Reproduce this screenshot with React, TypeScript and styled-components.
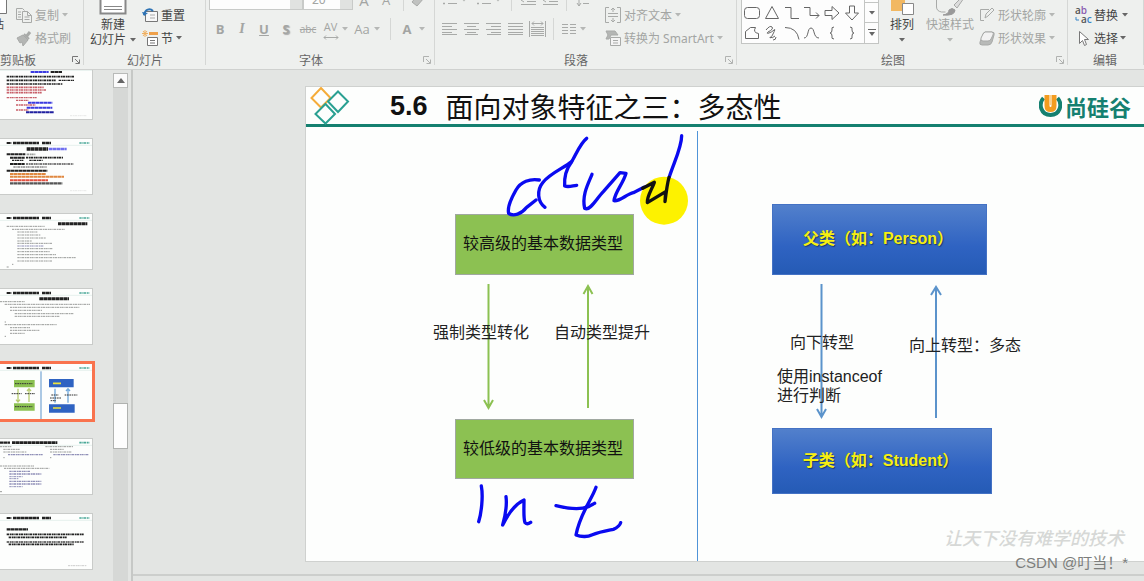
import React from "react";
import styled, { createGlobalStyle } from "styled-components";

const cjk = '"Noto Sans CJK SC", sans-serif';

const GlobalStyle = createGlobalStyle`
  * { box-sizing: border-box; }
  body { margin: 0; background: #e3e5e3; font-family: "Noto Sans", ${cjk}; font-size: 12px; color: #444; }
  button, select { font: inherit; color: inherit; }
  svg { display: block; flex: none; }
`;

/* ---------- page frame ---------- */

const Page = styled.div`
  display: flex;
  flex-direction: column;
  height: 100vh;
  overflow: hidden;
  position: relative;
`;

const Ribbon = styled.header`
  display: flex;
  flex: none;
  height: 70px;
  overflow: hidden;
  background: #eef0ee;
  border-bottom: 1px solid #cfd1cf;
`;

const Group = styled.section<{ $w?: number; $pad?: number }>`
  display: flex;
  flex-direction: column;
  justify-content: flex-end;
  position: relative;
  flex: ${(p) => (p.$w ? `0 0 ${p.$w}px` : "1 0 0")};
  padding-left: ${(p) => p.$pad ?? 0}px;
  &::after {
    content: "";
    position: absolute;
    right: 0;
    top: 0;
    bottom: 4px;
    width: 1px;
    background: #d5d7d5;
  }
`;

const GroupBody = styled.div<{ $gap?: number }>`
  display: flex;
  align-items: flex-end;
  height: 49px;
  gap: ${(p) => p.$gap ?? 0}px;
`;

const GroupFoot = styled.div<{ $inset?: number }>`
  display: flex;
  align-items: center;
  justify-content: space-between;
  height: 20px;
  padding: 2px 4px 0 ${(p) => p.$inset ?? 0}px;
  white-space: nowrap;
  color: #666;
`;

const Stack = styled.div`
  display: flex;
  flex-direction: column;
  align-items: flex-start;
`;

const Tool = styled.button<{ $dim?: boolean; $w?: number; $gap?: number }>`
  display: flex;
  align-items: center;
  justify-content: ${(p) => (p.$w ? "center" : "flex-start")};
  flex: none;
  gap: ${(p) => p.$gap ?? 3}px;
  width: ${(p) => (p.$w ? `${p.$w}px` : "auto")};
  height: 23px;
  padding: 0;
  border: 0;
  background: none;
  white-space: nowrap;
  color: ${(p) => (p.$dim ? "#a3a5a3" : "#444")};
`;

const BigTool = styled.button<{ $dim?: boolean; $w: number }>`
  display: flex;
  flex-direction: column;
  align-items: center;
  flex: none;
  width: ${(p) => p.$w}px;
  padding: 0 0 2px;
  border: 0;
  background: none;
  white-space: nowrap;
  line-height: 15px;
  color: ${(p) => (p.$dim ? "#a3a5a3" : "#444")};
`;

const BigLine = styled.span`
  display: flex;
  align-items: center;
  justify-content: center;
  gap: 4px;
  height: 15px;
`;

const PasteTool = styled(BigTool)`
  margin-left: -20px;
  margin-right: 12px;
  padding-bottom: 17px;
`;

const DrawStack = styled(Stack)`
  padding-left: 4px;
`;

const IconRow = styled.div<{ $low?: boolean }>`
  display: flex;
  align-items: center;
  height: ${(p) => (p.$low ? 24 : 26)}px;
  padding-bottom: ${(p) => (p.$low ? 0 : 8)}px;
  margin-bottom: ${(p) => (p.$low ? 8 : 0)}px;
`;

const Rule = styled.i<{ $m: number }>`
  width: 1px;
  height: 22px;
  margin: 0 ${(p) => p.$m}px;
  background: #d5d7d5;
`;

const Glyph = styled.span<{ $size?: number }>`
  font-family: "Open Sans", sans-serif;
  font-size: ${(p) => p.$size ?? 13}px;
  line-height: 16px;
`;

const BoldGlyph = styled(Glyph)`font-weight: 700;`;
const ItalicGlyph = styled(Glyph)`font-family: "Liberation Serif", serif; font-style: italic; font-weight: 700;`;
const UnderGlyph = styled(BoldGlyph)`text-decoration: underline;`;
const ShadowGlyph = styled(BoldGlyph)`text-shadow: 1px 1px 1px #aaa;`;
const StrikeGlyph = styled(Glyph)`text-decoration: line-through;`;

const Combo = styled.select<{ $w: number }>`
  appearance: none;
  width: ${(p) => p.$w}px;
  height: 22px;
  margin-bottom: 2px;
  padding: 0 14px 0 8px;
  border: 1px solid #c8cac8;
  border-radius: 0;
  background: linear-gradient(to left, #e0e2e0 12px, #fdfdfd 12px);
  color: #a3a5a3;
`;

const ShapeBox = styled.div`
  display: flex;
  width: 138px;
  height: 62px;
  margin-bottom: 5px;
  border: 1px solid #c3c5c3;
  background: #fdfdfd;
`;

const ShapeGrid = styled.div`
  display: grid;
  grid-template-columns: repeat(6, 20px);
  grid-auto-rows: 20px;
  width: 122px;
`;

const ShapeCell = styled.button`
  display: grid;
  place-items: center;
  padding: 0;
  border: 0;
  background: none;
`;

const ShapeScroll = styled.div`
  display: grid;
  grid-template-rows: repeat(3, 20px);
  flex: 1;
  border-left: 1px solid #c3c5c3;
`;

const ScrollCell = styled(ShapeCell)`
  border-bottom: 1px solid #c3c5c3;
`;

const Main = styled.main`
  display: flex;
  flex: 1;
  min-height: 0;
`;

/* ---------- thumbnails ---------- */

const ThumbList = styled.nav`
  display: flex;
  flex-direction: column;
  gap: 18px;
  flex: 0 0 113px;
  overflow: hidden;
`;

const Thumb = styled.button<{ $on?: boolean }>`
  flex: none;
  width: 102px;
  height: 57px;
  margin-left: -9px;
  padding: 0;
  border: 1px solid #c9cbc9;
  background: #fdfefd;
  outline: ${(p) => (p.$on ? "3px solid #f9734e" : "0")};
  outline-offset: -1px;
  &:first-child { margin-top: -7px; }
`;

const ScrollTrack = styled.div`
  display: flex;
  flex-direction: column;
  flex: 0 0 15px;
  margin-top: 3px;
  background: #d6d8d6;
`;

const ScrollUp = styled.button`
  display: grid;
  place-items: center;
  height: 15px;
  padding: 0;
  border: 1px solid #b8bab8;
  background: #fbfbfb;
`;

const ScrollHandle = styled.div`
  height: 46px;
  margin-top: 315px;
  border: 1px solid #b0b2b0;
  background: #fdfdfd;
`;

const Splitter = styled.div`
  flex: 0 0 5px;
  border-right: 2px solid #c6c8c6;
`;

/* ---------- slide ---------- */

const Workspace = styled.div`
  display: flex;
  flex-direction: column;
  flex: 1;
  min-width: 0;
  padding-top: 16px;
`;

const Slide = styled.article`
  display: flex;
  flex-direction: column;
  flex: 1;
  margin-left: 172px;
  border: 1px solid #cfd1cf;
  border-right: 0;
  background: #fdfefd;
`;

const NotesBar = styled.footer`
  flex: none;
  height: 19px;
  padding-top: 12px;
  &::before {
    content: "";
    display: block;
    height: 2px;
    background: #cccecc;
  }
`;

const SlideHead = styled.div`
  display: flex;
  align-items: center;
  flex: none;
  height: 40px;
  padding: 0 13px 0 4px;
  border-bottom: 3px solid #158070;
`;

const Title = styled.h1`
  display: flex;
  align-items: center;
  gap: 18px;
  flex: 1;
  margin: 0 0 0 40px;
  font: 400 28px/36px ${cjk};
  color: #111;
  white-space: nowrap;
`;

const TitleNo = styled.span`
  font: 700 27px/36px "Liberation Sans", sans-serif;
`;

const Brand = styled.div`
  display: flex;
  align-items: center;
  gap: 3px;
  font: 700 22px/32px ${cjk};
  color: #158070;
`;

const Diagram = styled.div`
  position: relative;
  flex: 1;
`;

const Layer = styled.svg<{ $x: number; $y: number }>`
  position: absolute;
  left: ${(p) => p.$x}px;
  top: ${(p) => p.$y}px;
`;

const Divider = styled.div`
  position: absolute;
  left: 391px;
  top: 4px;
  bottom: 0;
  width: 1px;
  background: #4f94d8;
`;

const Node = styled.div<{ $x: number; $y: number; $w: number; $h: number; $blue?: boolean }>`
  position: absolute;
  left: ${(p) => p.$x}px;
  top: ${(p) => p.$y}px;
  width: ${(p) => p.$w}px;
  height: ${(p) => p.$h}px;
  display: flex;
  align-items: center;
  justify-content: center;
  padding: 0 3px 1px 0;
  white-space: nowrap;
  font: ${(p) => (p.$blue ? 700 : 400)} 16px/20px "Liberation Sans", ${cjk};
  color: ${(p) => (p.$blue ? "#f7f010" : "#111")};
  text-shadow: ${(p) => (p.$blue ? "1px 1px 1px #1d3a6b" : "none")};
  background: ${(p) => (p.$blue ? "linear-gradient(#5280cc, #2f63c2 60%, #255bb5)" : "#8cc152")};
  border: 1px solid ${(p) => (p.$blue ? "#4472c4" : "#a0a8a0")};
`;

const Label = styled.p<{ $x: number; $y: number }>`
  position: absolute;
  left: ${(p) => p.$x}px;
  top: ${(p) => p.$y}px;
  margin: 0;
  font: 16px/19px "Liberation Sans", ${cjk};
  color: #222;
  white-space: nowrap;
`;

const Motto = styled.p`
  position: absolute;
  right: 20px;
  bottom: 13px;
  margin: 0;
  font: italic 500 18px/22px ${cjk};
  color: #d6d8d6;
`;

const Credit = styled.p`
  position: absolute;
  right: 16px;
  bottom: 8px;
  margin: 0;
  font: 15px/20px "Liberation Sans", ${cjk};
  color: #7c7e7c;
`;

/* ---------- icons ---------- */

const Caret = ({ c = "#666" }: { c?: string }) => (
  <svg width="6" height="4"><path d="M0 0h6L3 3.500z" fill={c} /></svg>
);
const DimCaret = () => <Caret c="#b5b7b5" />;

const Launcher = ({ c = "#b0b2b0" }: { c?: string }) => (
  <svg width="8" height="8" fill="none" stroke={c}><path d="M.5 6V.5H6M3 3l4 4M7.500 3.500v4h-4" /></svg>
);

const Draw = ({ w = 16, h = 16, c = "#a8aaa8", children }: { w?: number; h?: number; c?: string; children: React.ReactNode }) => (
  <svg width={w} height={h} fill="none" stroke={c} strokeWidth="1">{children}</svg>
);

const PasteIcon = () => <Draw w={32} h={32} c="#777"><path d="M12.500 4.500h14l4 4v20h-18z" fill="#fff" /></Draw>;
const CopyIcon = () => (
  <Draw><path d="M6 12.500H.5v-11h6l2 2" /><path d="M6.500 4.500h5l4 4v7h-9zM11.500 4.500v4h4M2 5h3M2 7.500h3M2 10h3M8.500 10h5M8.500 12.500h5" /></Draw>
);
const BrushIcon = () => (
  <Draw><path d="M1 8l6-3 5 5-5 6-1-4-2 1z" fill="#b4b6b4" /><path d="M8 4l5 5" strokeWidth="2" /><path d="M10 7l4-5" strokeWidth="3" /></Draw>
);
const NewSlideIcon = () => (
  <Draw w={28} h={28} c="#888"><path d="M1.500 1.500h25v23h-25z" fill="#fff" strokeWidth="2" /><path d="M5 17.500h18M5 20.500h18" /></Draw>
);
const ResetIcon = () => (
  <Draw c="#777"><path d="M3.500 4.500h12v10h-12z" fill="#f8f8f8" /><path d="M8 8h5M8 11h5" stroke="#aaa" /><path d="M2 8C3 2 8 1 11 4" stroke="#2f74b5" strokeWidth="2" /><path d="M0 5l2 4 4-3z" fill="#2f74b5" stroke="none" /></Draw>
);
const SectionIcon = () => (
  <Draw c="#777"><path d="M7 3.500h9" stroke="#efa04a" strokeWidth="3" /><path d="M3 0v7M0 3.500h6M1 1l4 5M5 1L1 6" stroke="#f0b060" /><path d="M5.500 7.500h10v8h-10zM8 10.500h5M8 13h5" fill="#fff" /></Draw>
);
const SpacingIcon = () => <Draw w={16} h={5}><path d="M1 2.500h14M3 .5l-2 2 2 2M13 .5l2 2-2 2" /></Draw>;
const EraserIcon = () => <Draw><path d="M2 10l7-8 5 4-7 8z" fill="#c0c2c0" /></Draw>;

const Lines = ({ rows }: { rows: string }) => <Draw w={15} h={12}><path d={rows} /></Draw>;
const ALIGN = {
  left: "M0 .5h15M0 3.500h10M0 6.500h15M0 9.500h10M0 11.500h15",
  center: "M0 .5h15M3 3.500h9M0 6.500h15M3 9.500h9M1 11.500h13",
  right: "M0 .5h15M5 3.500h10M0 6.500h15M5 9.500h10M1 11.500h14",
  full: "M0 .5h15M0 3.500h15M0 6.500h15M0 9.500h15M0 11.500h15",
  columns: "M0 1.500h6M8 1.500h6M0 4.500h6M8 4.500h6M0 7.500h6M8 7.500h6M0 10.500h6M8 10.500h6",
  indent: "M0 1.500h15M6 4.500h9M6 7.500h9M0 10.500h15M3 4L0 6l3 2",
  bullets: "M5 2.500h9M5 9.500h9M0 2.500h2M0 9.500h2M1 1.500v2M1 8.500v2",
};
const SpreadIcon = () => (
  <Draw w={17} h={16}><path d="M.5 0v16M16.500 0v16M3 2.500h11M5 .5l-2 2 2 2M12 .5l2 2-2 2M2 6.500h13M2 8.500h13M2 10.500h13M2 12.500h13M2 14.500h13" /></Draw>
);
const LineSpaceIcon = () => <Draw w={15}><path d="M3 1v13M1 11l2 3 2-3M7 3.500h8M7 7.500h8M7 11.500h6" /></Draw>;
const AlignTextIcon = () => (
  <Draw><path d="M4 .5H.5v15H4M12 .5h3.500v15H12M8 1v4M6 3l2-2 2 2M8 15v-4M6 13l2 2 2-2M3 6.500h10M3 9.500h10" /></Draw>
);
const SmartArtIcon = () => (
  <Draw><path d="M1 1h9l3 4H6l-2 4H1l2-4z" fill="#b4b6b4" /><path d="M5.500 7.500h10v8h-10zM8 10.500h5M8 13h5" fill="#f4f4f4" /></Draw>
);
const ArrangeIcon = () => (
  <Draw w={26} h={28} c="#888"><path d="M2 8h14v14H2z" fill="#f2b862" stroke="none" /><path d="M13.500 14.500h11v11h-11z" fill="#fff" /></Draw>
);
const StylesIcon = () => (
  <Draw w={30} h={30}><path d="M1.500 8v12q0 4 5 5h4" /><path d="M28 9l-9 9 3 3 7-10z" fill="#ddd" /><path d="M8 28q6-1 6-5 3-3 6 0 0 6-12 5z" fill="#999" stroke="#999" /></Draw>
);
const OutlineIcon = () => <Draw><path d="M10 2.500H1.500v11H5M6 11l1-4 6-6 2 2-6 6z" /></Draw>;
const EffectIcon = () => (
  <Draw><path d="M6 2h7q3 0 2 3l-2 7q-1 3-4 3H3q-3 0-2-3l2-5q1-5 3-5z" fill="#b8bab8" /><path d="M6 2h7q2 1 1 3l-2 4q-1 2-3 2H4q-3 0-2-3l2-4z" fill="#f2f2f2" /></Draw>
);
const ReplaceIcon = () => (
  <svg width="17" height="20" fontFamily="Open Sans, sans-serif" fontSize="10" fontWeight="600" fill="#555">
    <text x="0" y="9">a<tspan fill="#8a5bb0">b</tspan></text>
    <text x="6" y="18">a<tspan fill="#3a86c8">c</tspan></text>
    <path d="M1 12v3h3" fill="none" stroke="#3a86c8" />
  </svg>
);
const CursorIcon = () => <Draw w={17} c="#777"><path d="M4.500 1.500v12l3-3 2 5 2-1-2-5h4z" fill="#fff" /></Draw>;

const SHAPES = [
  "M1 3h14v10H1z", "M1 3h14v10H1z", "M2 8h12", "M2 12L14 4", "M3 3h10v10H3z", "M8 2l6 12H2z",
  "M3.500 2.500h9q3 0 3 3v5q0 3-3 3h-9q-3 0-3-3v-5q0-3 3-3z", "M8 1.500l6.500 12h-13z", "M1 2.500h6v11h8", "M0 2.500h6v8h9M12 7.500l3 3-3 3",
  "M1 5.500h7v-4l7 6.500-7 6.500v-4H1z", "M5.500 1v7h-4L8 15l6.500-7h-4V1z",
  "M1.500 13.500v-7l5-4h5q-3 5 3 6v5z", "M2 5Q6 0 8 2T4 7Q2 9 5 8T10 5T9 9T6 12Q8 14 11 11M9 15q3 0 3-3", "M1 2.500q12 0 14 12", "M0 13C5 13 3 3 7 3S9 13 15 13",
  "M10 2Q7 2 8 5q0 3-2 3 2 0 2 3-1 3 2 3", "M6 2q3 0 2 3 0 3 2 3-2 0-2 3 1 3-2 3",
];

const MoreCaret = () => <svg width="8" height="8"><path d="M0 .5h8" stroke="#666" /><path d="M1 3h6L4 7z" fill="#666" /></svg>;

/* ---------- thumbnail miniatures ---------- */

type Stroke = [x1: number, x2: number, y: number, color: string, width?: number];
const K = "#222", G = "#9a9c9a", R = "#c8606a", B = "#3a3ae0", O = "#e08840", P = "#9090b8";

const HEAD: Stroke[] = [[20, 34, 14, K, 6], [39, 117, 14, K, 8], [126, 153, 14, K, 7], [238, 268, 14, "#4aa898", 5]];

const MINIS: Stroke[][] = [
  [[92, 146, 26, B, 6], [152, 186, 26, K, 6], [20, 222, 40, K, 5], [20, 168, 51, K, 5], [176, 222, 51, K, 4], [20, 188, 62, K, 5],
    [20, 132, 72, R, 5], [20, 138, 80, R, 5], [20, 126, 88, R, 5], [20, 110, 103, R, 4], [48, 86, 111, R, 4], [84, 157, 118, B, 6],
    [48, 106, 125, R, 4], [80, 157, 133, B, 6], [48, 86, 140, R, 4], [78, 162, 147, "#2020a0", 6], [210, 260, 157, "#ddd", 2]],
  [...HEAD, [80, 144, 32, K, 10], [146, 200, 32, "#7070f0", 8], [20, 76, 48, K, 6], [80, 106, 48, G, 5], [30, 74, 58, K, 6], [78, 190, 58, K, 5],
    [36, 70, 66, K, 4], [88, 128, 66, K, 4], [30, 74, 77, K, 6], [78, 220, 77, "#555", 5], [40, 140, 86, "#888", 5], [20, 142, 97, K, 6],
    [30, 137, 107, O, 6], [30, 192, 115, O, 6], [30, 144, 126, "#e05040", 6], [30, 187, 135, "#555", 7], [210, 260, 157, "#ddd", 2]],
  [...HEAD, [174, 262, 31, K, 9], [20, 134, 39, G], [36, 194, 48, G], [52, 112, 56, G], [52, 122, 65, G], [52, 138, 74, G], [52, 96, 83, G],
    [52, 156, 90, G], [52, 132, 98, P], [52, 158, 106, G], [52, 150, 115, G], [52, 168, 124, G], [52, 228, 133, G], [52, 156, 143, G], [36, 40, 153, G], [20, 26, 161, G]],
  [...HEAD, [118, 207, 31, K, 9], [0, 74, 40, G], [14, 270, 48, G], [30, 238, 57, G], [30, 126, 66, G], [44, 222, 76, G], [44, 180, 84, G],
    [14, 18, 101, G], [14, 170, 109, G], [30, 90, 118, G], [30, 118, 126, G], [30, 74, 135, G], [14, 18, 144, G]],
  [...HEAD],
  [[0, 30, 13, K, 7], [36, 172, 13, K, 8], [238, 268, 13, "#4aa898", 5], [0, 34, 25, G], [136, 220, 25, G], [10, 60, 33, G], [150, 192, 33, G],
    [10, 80, 41, G], [150, 216, 41, G], [24, 128, 49, P, 4], [160, 266, 49, P, 4], [10, 14, 58, G], [150, 154, 58, G], [0, 102, 83, G],
    [12, 148, 90, G], [28, 90, 99, P, 4], [28, 124, 107, P, 4], [28, 68, 115, P], [28, 56, 121, P], [28, 124, 129, P, 4], [28, 124, 137, P, 4], [28, 68, 145, P], [0, 6, 160, G]],
  [...HEAD, [20, 84, 48, K, 7], [20, 252, 63, K, 5], [26, 200, 72, K, 5], [20, 252, 86, "#444", 5], [26, 222, 93, K, 5], [204, 260, 157, "#ccc", 3]],
];

const MiniDiagram = () => (
  <g strokeWidth="4" fill="none">
    <path d="M123 24v144" stroke="#5b93cb" strokeWidth="3" />
    <path d="M42 50h62v22H42zM42 120h62v22H42z" fill="#8cc152" stroke="none" />
    <path d="M147 47h74v25h-74zM147 123h77v25h-77z" fill="#2f63c2" stroke="none" />
    <path d="M54 76v40M48 109l6 7 6-7M87 116V77M81 83l6-7 6 7" stroke="#b8cc70" />
    <path d="M165 76v42M204 118V77M198 83l6-7 6 7" stroke="#70a8dc" />
    <path d="M45 61h52M45 130h52M35 91h30M75 91h30M154 95h22M150 104h34M152 112h16M194 95h38" stroke="#333" strokeWidth="3" strokeDasharray="5 2" />
    <path d="M159 60h24M159 134h24" stroke="#ede33c" strokeWidth="5" />
  </g>
);

const Mini = ({ n }: { n: number }) => (
  <svg width="100" height="55" viewBox="-24 2 300 165" fill="none">
    <path d="M-24 21h300" stroke="#b8d4cf" />
    {MINIS[n].map(([a, b, y, c, w = 3], i) => (
      <path key={i} d={`M${a} ${y}H${b}`} stroke={c} strokeWidth={w} strokeDasharray={w > 5 ? "11 1" : "7 2 4 1"} />
    ))}
    {n === 4 && <MiniDiagram />}
  </svg>
);

/* ---------- sections ---------- */

const Toolbar = () => (
  <Ribbon>
    <Group $w={84}>
      <GroupBody>
        <PasteTool $w={24}><PasteIcon />粘贴</PasteTool>
        <Stack>
          <Tool $dim><CopyIcon />复制<DimCaret /></Tool>
          <Tool $dim><BrushIcon />格式刷</Tool>
        </Stack>
      </GroupBody>
      <GroupFoot><span>剪贴板</span><Launcher c="#777" /></GroupFoot>
    </Group>

    <Group $w={122} $pad={6}>
      <GroupBody $gap={6}>
        <BigTool $w={46}>
          <NewSlideIcon />
          <BigLine>新建</BigLine>
          <BigLine>幻灯片<Caret /></BigLine>
        </BigTool>
        <Stack>
          <Tool><ResetIcon />重置</Tool>
          <Tool><SectionIcon />节<Caret /></Tool>
        </Stack>
      </GroupBody>
      <GroupFoot $inset={37}><span>幻灯片</span></GroupFoot>
    </Group>

    <Group $w={229} $pad={3}>
      <GroupBody>
        <Stack>
          <IconRow>
            <Combo $w={94} aria-label="字体名称"><option> </option></Combo>
            <Combo $w={50} aria-label="字号"><option>20</option></Combo>
            <Tool $dim $w={22}><Glyph $size={15}>A</Glyph></Tool>
            <Tool $dim $w={22}><Glyph>A</Glyph></Tool>
            <Rule $m={6} />
            <Tool $dim aria-label="清除格式"><EraserIcon /></Tool>
          </IconRow>
          <IconRow $low>
            <Tool $dim $w={22}><BoldGlyph>B</BoldGlyph></Tool>
            <Tool $dim $w={22}><ItalicGlyph $size={14}>I</ItalicGlyph></Tool>
            <Tool $dim $w={22}><UnderGlyph>U</UnderGlyph></Tool>
            <Tool $dim $w={22}><ShadowGlyph>S</ShadowGlyph></Tool>
            <Tool $dim $w={22}><StrikeGlyph $size={10}>abc</StrikeGlyph></Tool>
            <Tool $dim $w={32}><span><Glyph $size={11}>AV</Glyph><SpacingIcon /></span><DimCaret /></Tool>
            <Tool $dim $w={32} $gap={4}><Glyph>Aa</Glyph><DimCaret /></Tool>
            <Rule $m={7} />
            <Tool $dim $w={32} $gap={8}><BoldGlyph>A</BoldGlyph><DimCaret /></Tool>
          </IconRow>
        </Stack>
      </GroupBody>
      <GroupFoot $inset={90}><span>字体</span><Launcher /></GroupFoot>
    </Group>

    <Group $w={302} $pad={3}>
      <GroupBody $gap={11}>
        <Stack>
          <IconRow>
            <Tool $dim $w={34} aria-label="项目符号"><Lines rows={ALIGN.bullets} /><DimCaret /></Tool>
            <Tool $dim $w={34} aria-label="编号"><Lines rows={ALIGN.bullets} /><DimCaret /></Tool>
            <Rule $m={5} />
            <Tool $dim $w={22} aria-label="减少缩进"><Lines rows={ALIGN.indent} /></Tool>
            <Tool $dim $w={22} aria-label="增加缩进"><Lines rows={ALIGN.indent} /></Tool>
            <Rule $m={5} />
            <Tool $dim $w={22} aria-label="行距"><LineSpaceIcon /></Tool>
          </IconRow>
          <IconRow $low>
            <Tool $dim $w={22} aria-label="左对齐"><Lines rows={ALIGN.left} /></Tool>
            <Tool $dim $w={22} aria-label="居中"><Lines rows={ALIGN.center} /></Tool>
            <Tool $dim $w={22} aria-label="右对齐"><Lines rows={ALIGN.right} /></Tool>
            <Tool $dim $w={22} aria-label="两端对齐"><Lines rows={ALIGN.full} /></Tool>
            <Tool $dim $w={22} aria-label="分散对齐"><SpreadIcon /></Tool>
            <Rule $m={5} />
            <Tool $dim $w={30} aria-label="分栏"><Lines rows={ALIGN.columns} /><DimCaret /></Tool>
          </IconRow>
        </Stack>
        <Stack>
          <Tool $dim><AlignTextIcon />对齐文本<DimCaret /></Tool>
          <Tool $dim><SmartArtIcon />转换为 SmartArt<DimCaret /></Tool>
        </Stack>
      </GroupBody>
      <GroupFoot $inset={126}><span>段落</span><Launcher /></GroupFoot>
    </Group>

    <Group $w={331} $pad={4}>
      <GroupBody>
        <ShapeBox>
          <ShapeGrid>
            {SHAPES.map((d, i) => (
              <ShapeCell key={i} aria-label={`形状 ${i + 1}`}><Draw c="#666"><path d={d} /></Draw></ShapeCell>
            ))}
          </ShapeGrid>
          <ShapeScroll>
            <ScrollCell aria-label="上一行" />
            <ScrollCell aria-label="下一行"><Caret /></ScrollCell>
            <ShapeCell aria-label="更多形状"><MoreCaret /></ShapeCell>
          </ShapeScroll>
        </ShapeBox>
        <BigTool $w={46}><ArrangeIcon /><BigLine>排列</BigLine><BigLine><Caret /></BigLine></BigTool>
        <BigTool $w={50} $dim><StylesIcon /><BigLine>快速样式</BigLine><BigLine><DimCaret /></BigLine></BigTool>
        <DrawStack>
          <Tool $dim><OutlineIcon />形状轮廓<DimCaret /></Tool>
          <Tool $dim><EffectIcon />形状效果<DimCaret /></Tool>
        </DrawStack>
      </GroupBody>
      <GroupFoot $inset={140}><span>绘图</span><Launcher /></GroupFoot>
    </Group>

    <Group $pad={7}>
      <GroupBody>
        <Stack>
          <Tool $gap={2}><ReplaceIcon /><BigLine>替换</BigLine><BigLine /><Caret /></Tool>
          <Tool $gap={2}><CursorIcon />选择<Caret /></Tool>
        </Stack>
      </GroupBody>
      <GroupFoot $inset={18}><span>编辑</span></GroupFoot>
    </Group>
  </Ribbon>
);

const Arrows = () => (
  <Layer $x={0} $y={0} width="760" height="434" fill="none" strokeWidth="2">
    <path d="M182.500 157v123M178 273l4.500 8 4.500-8M282 281V160M277.500 167l4.500-8 4.500 8" stroke="#8cc152" />
    <path d="M515.500 157v133M511 282l4.500 8 4.500-8M630 291V160M625 168l5-8 5 8" stroke="#5b93cb" />
  </Layer>
);

const Ink = () => (
  <>
    <Layer $x={114} $y={3} width="290" height="160" viewBox="0 0 870 480" fill="none" stroke="#0a0af0" strokeWidth="10" strokeLinecap="round" strokeLinejoin="round">
      <circle cx="732" cy="212" r="72" fill="#fdf200" stroke="none" />
      <path d="M358 150C330 145 302 155 288 180C272 208 262 235 266 250C280 260 305 252 320 232L348 210" />
      <path d="M500 25C480 40 465 80 455 95C430 115 390 130 368 158C350 180 352 215 375 232" />
      <path d="M455 95C440 115 432 140 434 168C445 172 455 168 470 166" />
      <path d="M516 133C505 160 485 195 494 235C510 245 530 205 550 185L600 128L618 130C610 160 585 185 582 212C600 215 620 192 640 188L672 172" />
      <path d="M748 140C765 90 785 50 785 17" />
      <path d="M668 175L703 157C695 180 680 200 682 218L737 185L735 215C738 190 742 160 747 142" stroke="#111" />
    </Layer>
    <Layer $x={114} $y={153} width="290" height="281" viewBox="0 0 870 843" fill="none" stroke="#0a0af0" strokeWidth="10" strokeLinecap="round" strokeLinejoin="round">
      <path d="M184 618C190 650 184 700 176 725" />
      <path d="M258 650C262 680 255 710 248 735C265 700 290 670 312 660C312 690 310 715 315 728C322 735 328 730 332 727" />
      <path d="M528 622C515 660 480 700 468 765C485 772 505 770 515 765C540 755 560 752 580 748C595 742 600 735 602 728" />
      <path d="M408 677C440 685 480 690 505 680C515 675 520 672 524 670" />
    </Layer>
  </>
);

const SlideView = () => (
  <Slide>
    <SlideHead>
      <svg width="40" height="38" fill="none" strokeWidth="2">
        <path d="M11 1L20.500 11 11 20.500 1.500 11z" stroke="#f5ac3a" />
        <path d="M28 4.500L38 14.500 28 25 18 14.500zM15.500 17L25 27 15.500 36.500 5.500 27z" stroke="#2aa092" />
      </svg>
      <Title><TitleNo>5.6</TitleNo>面向对象特征之三：多态性</Title>
      <Brand>
        <svg width="23" height="24" fill="none">
          <path d="M4.500 4C-1 10 2 21 11.500 21S24 10 18.500 4" stroke="#158070" strokeWidth="4" />
          <path d="M8 1v11q0 3.500 3.500 3.500T15 12V1" stroke="#f39c1f" strokeWidth="5" />
          <path d="M11.500 1v10" stroke="#fbd08a" />
        </svg>
        尚硅谷
      </Brand>
    </SlideHead>
    <Diagram>
      <Divider />
      <Arrows />
      <Node $x={149} $y={87} $w={179} $h={61}>较高级的基本数据类型</Node>
      <Node $x={149} $y={292} $w={179} $h={60}>较低级的基本数据类型</Node>
      <Node $blue $x={466} $y={77} $w={215} $h={71}>父类（如：Person）</Node>
      <Node $blue $x={466} $y={301} $w={220} $h={66}>子类（如：Student）</Node>
      <Label $x={127} $y={196}>强制类型转化</Label>
      <Label $x={248} $y={196}>自动类型提升</Label>
      <Label $x={484} $y={206}>向下转型</Label>
      <Label $x={471} $y={240}>使用instanceof<br />进行判断</Label>
      <Label $x={603} $y={209}>向上转型：多态</Label>
      <Ink />
      <Motto>让天下没有难学的技术</Motto>
    </Diagram>
  </Slide>
);

export default function App() {
  return (
    <Page>
      <GlobalStyle />
      <Toolbar />
      <Main>
        <ThumbList aria-label="幻灯片">
          {MINIS.map((_, i) => (
            <Thumb key={i} $on={i === 4} aria-label={`幻灯片 ${i + 1}`}><Mini n={i} /></Thumb>
          ))}
        </ThumbList>
        <ScrollTrack>
          <ScrollUp aria-label="向上滚动"><svg width="8" height="5"><path d="M0 5h8L4 0z" fill="#666" /></svg></ScrollUp>
          <ScrollHandle />
        </ScrollTrack>
        <Splitter />
        <Workspace>
          <SlideView />
          <NotesBar />
        </Workspace>
      </Main>
      <Credit>CSDN @叮当！*</Credit>
    </Page>
  );
}
